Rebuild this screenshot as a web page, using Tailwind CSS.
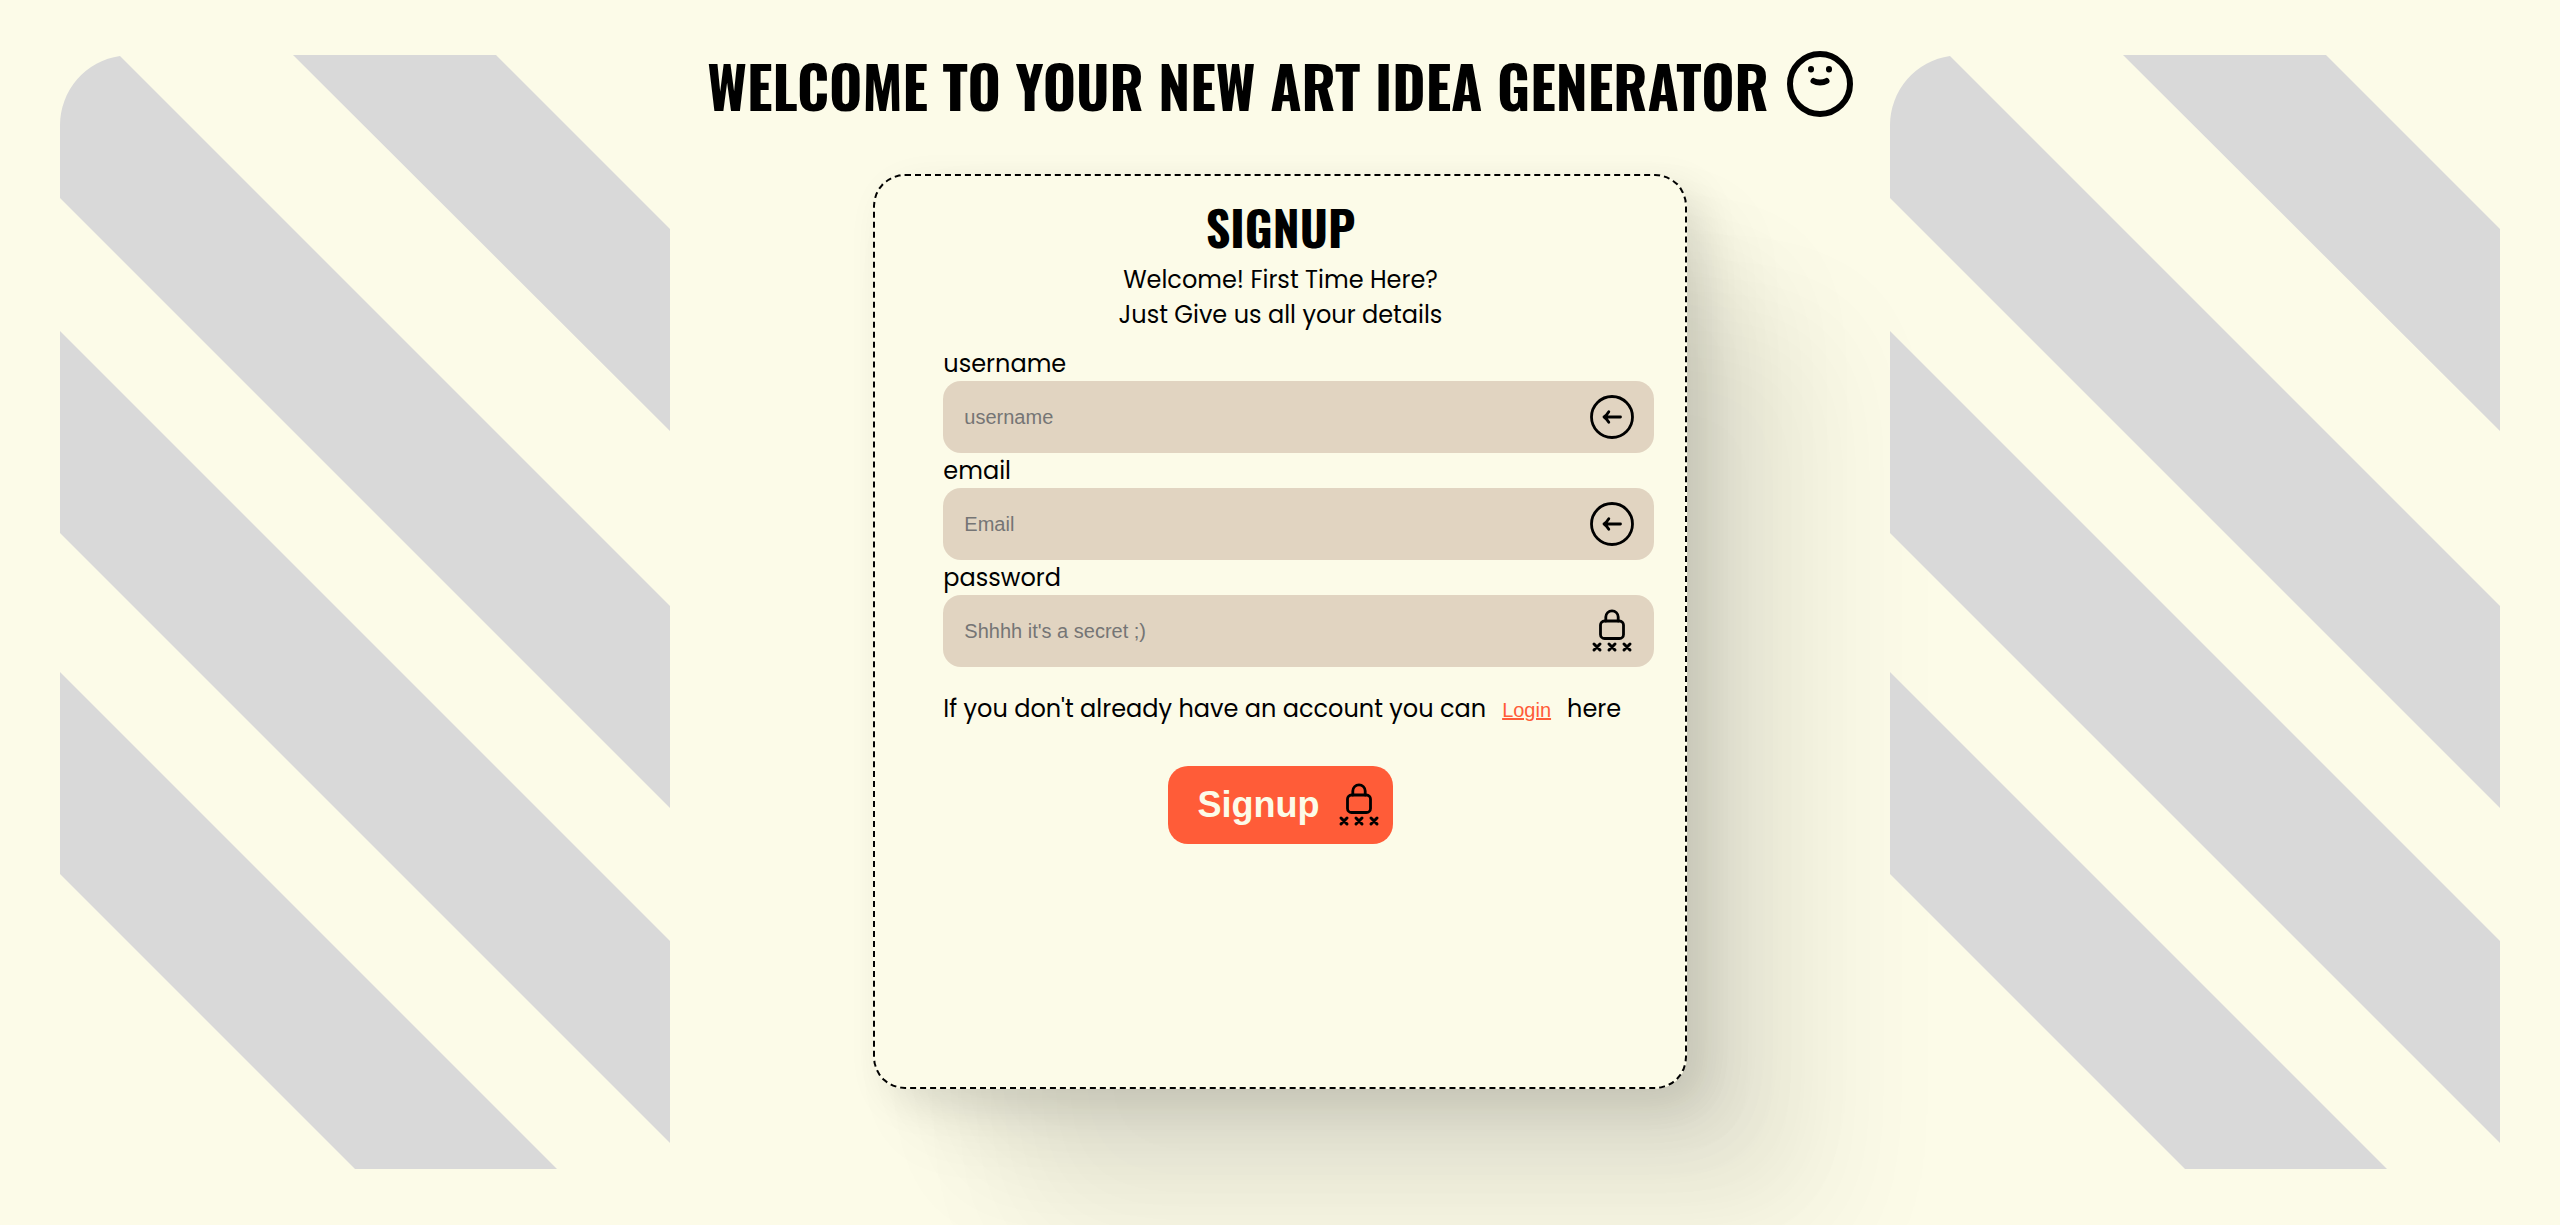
<!DOCTYPE html>
<html lang="en">
<head>
<meta charset="utf-8">
<meta name="viewport" content="width=device-width, initial-scale=1">
<title>Signup</title>
<script src="https://cdn.jsdelivr.net/npm/@tailwindcss/browser@4"></script>
</head>
<body class="min-h-screen overflow-x-hidden bg-[#fcfbe8] font-[Poppins,Inter,sans-serif] text-black">

<svg class="hidden" aria-hidden="true">
  <symbol id="stripes" viewBox="0 0 610 1114">
    <path fill="#d9d9d9" d="M233 0H436L610 174V376ZM0 70A70 70 0 0 1 60 1L610 551V753L0 143ZM0 276L610 886V1088L0 478ZM0 617L497 1114H295L0 819Z"/>
  </symbol>
  <symbol id="arrow" viewBox="0 0 48 48">
    <g fill="none" stroke="currentColor" stroke-width="2.8" stroke-linecap="round" stroke-linejoin="round">
      <circle cx="24" cy="24" r="20.5"/>
      <path d="M32.5 24H16M20.8 18.8C19.5 21 18 22.8 16 24C18 25.2 19.5 27 20.8 29.2"/>
    </g>
  </symbol>
  <symbol id="lock" viewBox="0 0 48 48">
    <g fill="none" stroke="currentColor" stroke-width="2.8" stroke-linecap="round" stroke-linejoin="round">
      <rect x="12.5" y="14" width="23" height="17.5" rx="4"/>
      <path d="M17.8 14V10A6.2 6.2 0 0 1 30.2 10V14"/>
      <path stroke-width="3" d="M6 37L12 43M12 37L6 43M21 37L27 43M27 37L21 43M36 37L42 43M42 37L36 43"/>
    </g>
  </symbol>
</svg>

<div class="grid grid-cols-[minmax(0,1fr)_minmax(0,2fr)_minmax(0,1fr)] items-start px-[60px]">
  <svg class="relative z-10 mt-[55px] w-full" viewBox="0 0 610 1114" aria-hidden="true"><use href="#stripes"/></svg>

  <main class="flex flex-col items-center">
    <header class="flex h-[174px] items-start justify-center gap-[18px] pt-[51px]">
      <h1 class="font-[Oswald,Roboto,sans-serif] text-[57px] leading-[68px] font-bold whitespace-nowrap">WELCOME TO YOUR NEW ART IDEA GENERATOR</h1>
      <svg class="size-[66px] shrink-0" viewBox="0 0 66 66" aria-hidden="true">
        <g fill="none" stroke="#000" stroke-width="6" stroke-linecap="round">
          <circle cx="33" cy="33" r="30"/>
          <path d="M24 18V18.5M42 18V18.5M26.5 30C30 32 36 32 39.5 30"/>
        </g>
      </svg>
    </header>

    <section class="min-h-[915px] w-2/3 rounded-[32px] border-2 border-dashed border-black bg-[#fcfbe8] pt-6 pr-[31px] pl-[68px] shadow-[14px_14px_40px_rgba(0,0,0,0.09),40px_40px_70px_rgba(0,0,0,0.06),90px_90px_100px_rgba(0,0,0,0.05),150px_150px_130px_rgba(0,0,0,0.05)]">
      <div class="pr-9 text-center">
        <h2 class="mb-2 font-[Oswald,Roboto,sans-serif] text-[48px] leading-[54px] font-bold">SIGNUP</h2>
        <p class="text-[24px] leading-[35px]">Welcome! First Time Here?<br>Just Give us all your details</p>
      </div>
      <form class="mt-3.5">
        <label for="username" class="block text-[24px] leading-[35px]">username</label>
        <div class="relative">
          <input id="username" type="text" placeholder="username" class="h-[72px] w-full rounded-[18px] bg-[#e1d4c1] pr-20 pl-[21px] font-['Liberation_Sans',sans-serif] text-[20px] placeholder:text-[#757575]">
          <svg class="absolute top-3 right-[18px] size-12" aria-hidden="true"><use href="#arrow"/></svg>
        </div>
        <label for="email" class="block text-[24px] leading-[35px]">email</label>
        <div class="relative">
          <input id="email" type="email" placeholder="Email" class="h-[72px] w-full rounded-[18px] bg-[#e1d4c1] pr-20 pl-[21px] font-['Liberation_Sans',sans-serif] text-[20px] placeholder:text-[#757575]">
          <svg class="absolute top-3 right-[18px] size-12" aria-hidden="true"><use href="#arrow"/></svg>
        </div>
        <label for="password" class="block text-[24px] leading-[35px]">password</label>
        <div class="relative">
          <input id="password" type="password" placeholder="Shhhh it's a secret ;)" class="h-[72px] w-full rounded-[18px] bg-[#e1d4c1] pr-20 pl-[21px] font-['Liberation_Sans',sans-serif] text-[20px] placeholder:text-[#757575]">
          <svg class="absolute top-3 right-[18px] size-12" aria-hidden="true"><use href="#lock"/></svg>
        </div>
        <p class="mt-6 flex items-baseline gap-4 text-[24px] leading-[35px] whitespace-nowrap">
          <span>If you don't already have an account you can</span>
          <a href="#login" class="font-['Liberation_Sans',sans-serif] text-[20px] text-[#ff5c38] underline">Login</a>
          <span>here</span>
        </p>
        <div class="mt-[38px] flex justify-center pr-9">
          <button type="submit" class="flex h-[78px] items-center gap-4 rounded-[20px] bg-[#ff5c38] pr-[10px] pl-[30px] font-['Liberation_Sans',sans-serif] text-[36px] font-bold text-[#fcfbe8]">
            Signup
            <svg class="size-12 text-black" aria-hidden="true"><use href="#lock"/></svg>
          </button>
        </div>
      </form>
    </section>
  </main>

  <svg class="relative z-10 mt-[55px] w-full" viewBox="0 0 610 1114" aria-hidden="true"><use href="#stripes"/></svg>
</div>
</body>
</html>
